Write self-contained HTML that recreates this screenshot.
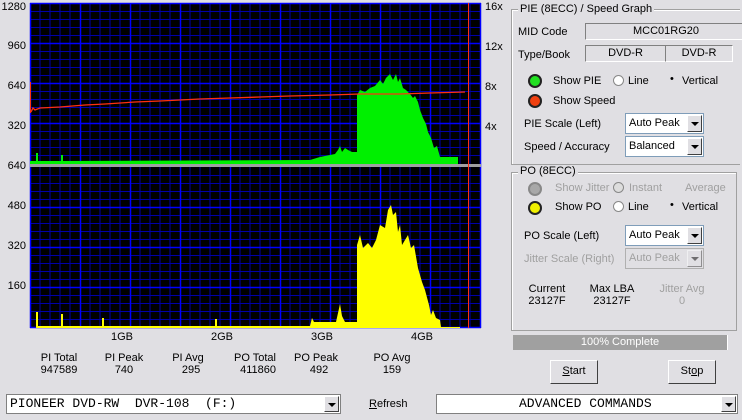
<!DOCTYPE html>
<html><head><style>
body{margin:0;width:742px;height:420px;background:#e0dfe3;font-family:"Liberation Sans",sans-serif;font-size:11px;color:#000;position:relative;overflow:hidden}
.a{position:absolute;white-space:nowrap}
.r{text-align:right}
.c{text-align:center}
.grp{position:absolute;border:1px solid #a0a0a0;box-shadow:1px 1px 0 #fff inset}
.fld{position:absolute;border:1px solid #808080;border-right-color:#fff;border-bottom-color:#fff;background:#e0dfe3;text-align:center}
.cmb{position:absolute;background:#fff;border:1px solid #7f9db9;box-sizing:border-box;padding-left:3px;line-height:18px}
.cmb .b{position:absolute;right:1px;top:1px;bottom:1px;width:15px;background:#e0dfe3;border:1px solid;border-color:#fff #404040 #404040 #fff;box-sizing:border-box}
.cmb .b:after{content:"";position:absolute;left:3px;top:6px;border-left:4px solid transparent;border-right:4px solid transparent;border-top:4px solid #000}
.dis{color:#a0a0a0}
.btn{position:absolute;background:#e0dfe3;border:1px solid;border-color:#fff #404040 #404040 #fff;box-sizing:border-box;text-align:center;line-height:21px}
.rad{position:absolute;width:11px;height:11px;border-radius:50%;background:#fff;border:1px solid #888;box-sizing:border-box}
.led{position:absolute;width:14px;height:14px;border-radius:50%;border:2px solid #222;box-sizing:border-box}
</style></head><body>
<svg class="a" style="left:0;top:0" width="500" height="332">
<rect x="30" y="3" width="451" height="325" fill="#000"/>
<g stroke="#0000a8" stroke-width="1">
<path d="M40 3V328M50 3V328M60 3V328M70 3V328M90 3V328M100 3V328M110 3V328M120 3V328M140 3V328M150 3V328M160 3V328M170 3V328M190 3V328M200 3V328M210 3V328M220 3V328M240 3V328M250 3V328M260 3V328M270 3V328M290 3V328M300 3V328M310 3V328M320 3V328M340 3V328M350 3V328M360 3V328M370 3V328M390 3V328M400 3V328M410 3V328M420 3V328M440 3V328M450 3V328M460 3V328M470 3V328"/>
<path d="M30 11.5H481M30 19.5H481M30 27.5H481M30 35.5H481M30 51.5H481M30 59.5H481M30 67.5H481M30 75.5H481M30 91.5H481M30 99.5H481M30 107.5H481M30 115.5H481M30 131.5H481M30 139.5H481M30 147.5H481M30 155.5H481M30 175.5H481M30 183.5H481M30 191.5H481M30 199.5H481M30 215.5H481M30 223.5H481M30 231.5H481M30 239.5H481M30 255.5H481M30 263.5H481M30 271.5H481M30 279.5H481M30 295.5H481M30 303.5H481M30 311.5H481M30 319.5H481"/>
</g>
<g stroke="#0000ff" stroke-width="1.5">
<path d="M30.5 3V328M80.5 3V328M130.5 3V328M180.5 3V328M230.5 3V328M280.5 3V328M330.5 3V328M380.5 3V328M430.5 3V328M480.5 3V328"/>
<path d="M30 43.5H481M30 83.5H481M30 123.5H481M30 207.5H481M30 247.5H481M30 287.5H481M30 327.5H481M30 3.5H481"/>
</g>
<rect x="30" y="164" width="451" height="3" fill="#a0a0a0"/>
<polygon fill="#00f000" points="30,164 30,161 36,161 36,153 38,153 38,161 61,161 61,155 63,155 63,161 310,160 320,157 325,156 330,155 335,154 338,150 340,146 342,152 345,148 348,150 352,152 357,152 357,95 360,90 365,92 370,88 375,86 380,80 383,84 386,78 390,74 393,80 396,74 398,82 400,78 403,88 406,90 410,94 413,98 415,96 418,102 420,110 423,118 426,124 428,132 431,138 434,148 437,146 440,157 458,157 458,164"/>
<polyline fill="none" stroke="#ff3010" stroke-width="1.3" points="31,112 33,108 35,110 40,108 60,107 85,105 105,104 135,102 160,101 200,99 230,98 260,97 290,96 330,95 360,94 400,94 430,93 465,92"/>
<line x1="30.5" y1="82" x2="30.5" y2="113" stroke="#ff3010"/>
<line x1="468.5" y1="3" x2="468.5" y2="328" stroke="#ff3010"/>
<polygon fill="#ffff00" points="30,328 36,328 36,312 38,312 38,326 61,326 61,314 63,314 63,326 102,326 102,318 104,318 104,326 215,326 215,319 217,319 217,326 310,326 312,318 314,322 336,322 340,304 342,316 345,322 352,322 357,322 357,245 360,235 363,248 368,243 372,248 376,240 380,225 385,228 388,210 391,205 393,215 396,212 398,232 400,225 402,245 405,240 408,235 411,248 414,245 418,268 422,282 425,290 429,305 431,315 433,310 436,318 440,320 441,327 460,327 460,328"/>
</svg>
<div class="a r" style="left:0;width:26px;top:1px">1280</div>
<div class="a r" style="left:0;width:26px;top:40px">960</div>
<div class="a r" style="left:0;width:26px;top:80px">640</div>
<div class="a r" style="left:0;width:26px;top:120px">320</div>
<div class="a r" style="left:0;width:26px;top:160px">640</div>
<div class="a r" style="left:0;width:26px;top:200px">480</div>
<div class="a r" style="left:0;width:26px;top:240px">320</div>
<div class="a r" style="left:0;width:26px;top:280px">160</div>
<div class="a" style="left:485px;top:1px">16x</div>
<div class="a" style="left:485px;top:41px">12x</div>
<div class="a" style="left:485px;top:81px">8x</div>
<div class="a" style="left:485px;top:121px">4x</div>
<div class="a" style="left:111px;top:331px">1GB</div>
<div class="a" style="left:211px;top:331px">2GB</div>
<div class="a" style="left:311px;top:331px">3GB</div>
<div class="a" style="left:411px;top:331px">4GB</div>
<div class="a c" style="left:29px;width:60px;top:352px">PI Total<br>947589</div>
<div class="a c" style="left:94px;width:60px;top:352px">PI Peak<br>740</div>
<div class="a c" style="left:158px;width:60px;top:352px">PI Avg<br>&nbsp;&nbsp;295</div>
<div class="a c" style="left:225px;width:60px;top:352px">PO Total<br>&nbsp;&nbsp;411860</div>
<div class="a c" style="left:286px;width:60px;top:352px">PO Peak<br>&nbsp;&nbsp;492</div>
<div class="a c" style="left:362px;width:60px;top:352px">PO Avg<br>159</div>

<div class="grp" style="left:511px;top:9px;width:228px;height:154px;border-right:none"></div>
<div class="a" style="left:518px;top:3px;background:#e0dfe3;padding:0 2px">PIE (8ECC) / Speed Graph</div>
<div class="a" style="left:518px;top:26px">MID Code</div>
<div class="fld" style="left:585px;top:23px;width:160px;height:15px;line-height:15px">MCC01RG20</div>
<div class="a" style="left:518px;top:49px">Type/Book</div>
<div class="fld" style="left:585px;top:45px;width:79px;height:15px;line-height:15px">DVD-R</div>
<div class="fld" style="left:665px;top:45px;width:66px;height:15px;line-height:15px">DVD-R</div>
<div class="led" style="left:528px;top:74px;background:#22e022"></div>
<div class="a" style="left:553px;top:75px">Show PIE</div>
<div class="rad" style="left:613px;top:75px"></div>
<div class="a" style="left:628px;top:75px">Line</div>
<div class="a" style="left:670px;top:73px">•</div>
<div class="a" style="left:682px;top:75px">Vertical</div>
<div class="led" style="left:528px;top:94px;background:#f04010"></div>
<div class="a" style="left:553px;top:95px">Show Speed</div>
<div class="a" style="left:524px;top:118px">PIE Scale (Left)</div>
<div class="cmb" style="left:625px;top:113px;width:79px;height:21px">Auto Peak<div class="b"></div></div>
<div class="a" style="left:524px;top:141px">Speed / Accuracy</div>
<div class="cmb" style="left:625px;top:136px;width:79px;height:21px">Balanced<div class="b"></div></div>

<div class="grp" style="left:511px;top:172px;width:224px;height:157px"></div>
<div class="a" style="left:518px;top:165px;background:#e0dfe3;padding:0 2px">PO (8ECC)</div>
<div class="led" style="left:528px;top:182px;background:#a8a8a8;border-color:#888"></div>
<div class="a dis" style="left:555px;top:182px">Show Jitter</div>
<div class="rad" style="left:613px;top:182px;background:#ddd"></div>
<div class="a dis" style="left:629px;top:182px">Instant</div>
<div class="a dis" style="left:685px;top:182px">Average</div>
<div class="led" style="left:528px;top:201px;background:#f0f000"></div>
<div class="a" style="left:555px;top:201px">Show PO</div>
<div class="rad" style="left:613px;top:201px"></div>
<div class="a" style="left:628px;top:201px">Line</div>
<div class="a" style="left:670px;top:199px">•</div>
<div class="a" style="left:682px;top:201px">Vertical</div>
<div class="a" style="left:524px;top:230px">PO Scale (Left)</div>
<div class="cmb" style="left:625px;top:225px;width:79px;height:21px">Auto Peak<div class="b"></div></div>
<div class="a dis" style="left:524px;top:253px">Jitter Scale (Right)</div>
<div class="cmb dis" style="left:625px;top:248px;width:79px;height:21px;background:#e0dfe3;border-color:#b0b0b0">Auto Peak<div class="b" style="opacity:.5"></div></div>
<div class="a c" style="left:517px;width:60px;top:283px">Current<br>23127F</div>
<div class="a c" style="left:582px;width:60px;top:283px">Max LBA<br>23127F</div>
<div class="a c dis" style="left:652px;width:60px;top:283px">Jitter Avg<br>0</div>
<div class="a c" style="left:513px;top:335px;width:214px;height:15px;line-height:15px;background:#a0a0a0;color:#fff;border-right:1px solid #fff">100% Complete</div>
<div class="btn" style="left:550px;top:360px;width:48px;height:24px"><u>S</u>tart</div>
<div class="btn" style="left:668px;top:360px;width:48px;height:24px">St<u>o</u>p</div>
<div class="cmb" style="left:6px;top:394px;width:335px;height:20px;font-family:'Liberation Mono',monospace;font-size:13px;line-height:17px;border-color:#808080">PIONEER DVD-RW&nbsp; DVR-108&nbsp; (F:)<div class="b"></div></div>
<div class="a" style="left:369px;top:398px"><u>R</u>efresh</div>
<div class="cmb" style="left:436px;top:394px;width:302px;height:20px;font-family:'Liberation Mono',monospace;font-size:13px;line-height:17px;padding-left:82px;border-color:#808080">ADVANCED COMMANDS<div class="b"></div></div>
</body></html>
